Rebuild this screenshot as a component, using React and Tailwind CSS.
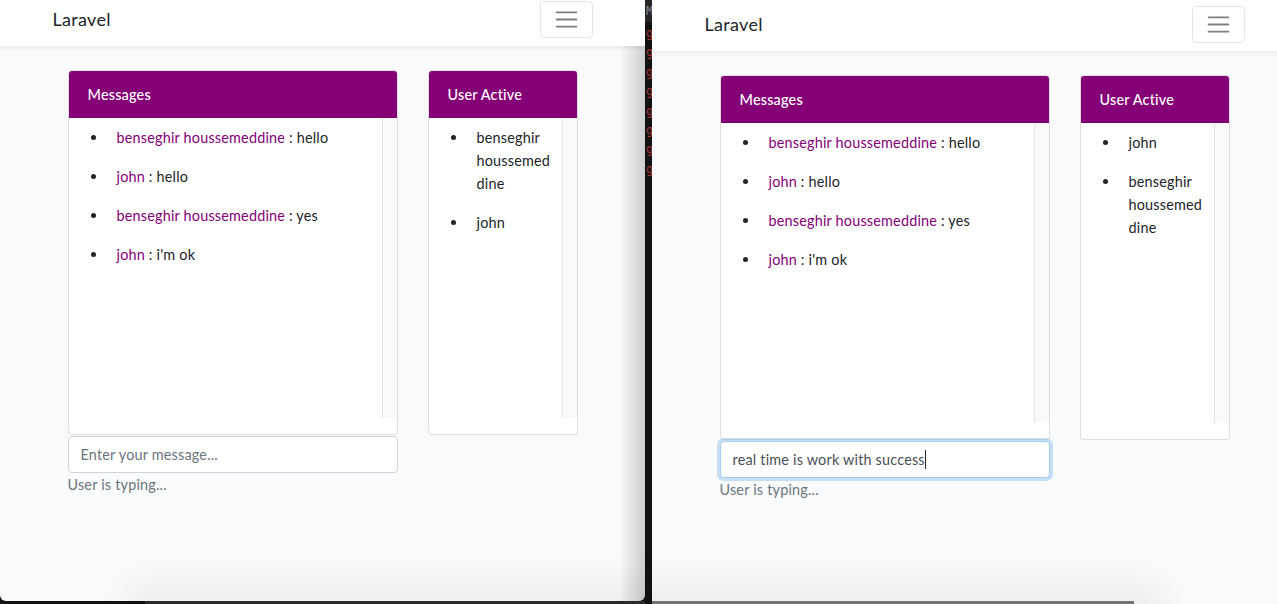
import React from "react";

function Hamburger() {
  return (
    <div className="w-[53px] h-[37px] border border-black/10 rounded-[4px] flex items-center justify-center">
      <svg width="27" height="27" viewBox="0 0 30 30">
        <path
          stroke="rgba(0,0,0,0.5)"
          strokeWidth="2"
          strokeLinecap="round"
          strokeMiterlimit="10"
          d="M4 7h22M4 15h22M4 23h22"
        />
      </svg>
    </div>
  );
}

function Card({ title, widthClass, children }) {
  return (
    <div className={`${widthClass} bg-white border border-black/[0.125] rounded-[4px] overflow-hidden`}>
      <div className="h-[47px] bg-[#850077] text-white px-[19px] flex items-center border-b border-black/[0.125] font-medium">
        {title}
      </div>
      <div className="flex h-[300px]">
        <div className="flex-1 pt-[8px] overflow-hidden">{children}</div>
        <div className="w-[15px] bg-[#f9f9f9] border-l border-[#e4e4e4]" />
      </div>
      <div className="h-[16px]" />
    </div>
  );
}

function Item({ children }) {
  return (
    <li className="flex items-start mb-[16px]">
      <span className="ml-[22px] mt-[9px] w-[5px] h-[5px] rounded-full bg-[#212529] shrink-0" />
      <div className="ml-[21px]">{children}</div>
    </li>
  );
}

const messages = [
  ["benseghir houssemeddine", "hello"],
  ["john", "hello"],
  ["benseghir houssemeddine", "yes"],
  ["john", "i'm ok"],
];

function Window({ users, focused, shift }) {
  return (
    <div className={`w-[645px] ${shift}`}>
      <nav className="h-[51px] bg-white shadow-[0_2px_4px_rgba(0,0,0,0.075)] relative z-10">
        <div className="w-[540px] mx-auto flex justify-between">
          <div className="text-[18px] leading-[23px] mt-[13px] text-[#212529] tracking-[0.3px]">Laravel</div>
          <div className="mt-[6px]">
            <Hamburger />
          </div>
        </div>
      </nav>
      <main className="py-[24px]">
        <div className="w-[540px] mx-auto px-[15px] flex items-start gap-[30px]">
          <div className="w-[330px]">
            <Card title="Messages" widthClass="w-[330px]">
              <ul>
                {messages.map(([n, m], i) => (
                  <Item key={i}>
                    <span className="text-[#850077]">{n}</span> : {m}
                  </Item>
                ))}
              </ul>
            </Card>
            {focused ? (
              <div className="mt-px h-[37px] border border-[#a1cbef] rounded-[4px] bg-white px-[12px] flex items-center text-[#495057] shadow-[0_0_0_3px_rgba(52,144,220,0.25)]">
                <span>real time is work with success</span>
                <span className="w-px h-[19px] bg-[#222]" />
              </div>
            ) : (
              <input
                className="mt-px w-full h-[37px] border border-[#ced4da] rounded-[4px] bg-white px-[12px] text-[#495057] placeholder:text-[#6c757d] outline-none tracking-[0.2px]"
                placeholder="Enter your message..."
                readOnly
              />
            )}
            <div className="text-[#6c757d]">User is typing...</div>
          </div>
          <Card title="User Active" widthClass="w-[150px]">
            <ul>
              {users.map((u, i) => (
                <Item key={i}>
                  {u.map((line, j) => (
                    <div key={j}>{line}</div>
                  ))}
                </Item>
              ))}
            </ul>
          </Card>
        </div>
      </main>
    </div>
  );
}

export default function App() {
  return (
    <div className="relative w-[1277px] h-[604px] overflow-hidden bg-[#121212] flex font-['Lato',sans-serif] text-[14.4px] leading-[23px] tracking-[0.2px] text-[#212529]">
      <div className="relative w-[645px] h-[601px] bg-[#f8fafc] overflow-hidden rounded-b-[6px] shrink-0">
        <Window
          shift="-mt-[5px]"
          users={[["benseghir", "houssemed", "dine"], ["john"]]}
        />
        <div className="absolute inset-y-0 right-0 w-[26px] bg-linear-to-r from-transparent to-black/[0.18]" />
      </div>
      <div className="w-[7px] shrink-0 overflow-hidden bg-[#121212] flex flex-col">
        <div className="h-[22px] bg-[#262626] text-[#8a8a8a] font-['DejaVu_Sans_Mono',monospace] text-[12px] leading-[22px] pl-[1px]">
          M
        </div>
        <div className="pt-[2px] text-[#a83232] font-['DejaVu_Sans_Mono',monospace] text-[12px] leading-[19.4px] pl-[1px]">
          {Array.from({ length: 8 }).map((_, i) => (
            <div key={i}>g</div>
          ))}
        </div>
      </div>
      <div className="relative w-[625px] h-[604px] bg-[#f8fafc] overflow-hidden shrink-0">
        <Window focused shift="" users={[["john"], ["benseghir", "houssemed", "dine"]]} />
      </div>
      <div className="absolute left-[150px] top-[608px] w-[990px] h-[10px] shadow-[0_0_40px_24px_rgba(0,0,0,0.06)]" />
      <div className="absolute left-[652px] top-[601px] w-[482px] h-[3px] bg-[#737373]" />
      <div className="absolute left-[145px] top-[601px] w-[500px] h-[3px] bg-[#2a2a2a]" />
    </div>
  );
}
